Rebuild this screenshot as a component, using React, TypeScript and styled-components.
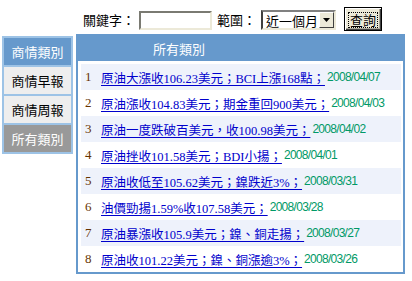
import styled, { createGlobalStyle } from 'styled-components';

type NewsItem = { title: string; date: string };
type TabVariant = 'active' | 'normal' | 'dim';

const news: NewsItem[] = [
  { title: '原油大漲收106.23美元；BCI上漲168點；', date: '2008/04/07' },
  { title: '原油漲收104.83美元；期金重回900美元；', date: '2008/04/03' },
  { title: '原油一度跌破百美元，收100.98美元；', date: '2008/04/02' },
  { title: '原油挫收101.58美元；BDI小揚；', date: '2008/04/01' },
  { title: '原油收低至105.62美元；鎳跌近3%；', date: '2008/03/31' },
  { title: '油價勁揚1.59%收107.58美元；', date: '2008/03/28' },
  { title: '原油暴漲收105.9美元；鎳、銅走揚；', date: '2008/03/27' },
  { title: '原油收101.22美元；鎳、銅漲逾3%；', date: '2008/03/26' },
];

const tabs: { label: string; variant: TabVariant }[] = [
  { label: '商情類別', variant: 'active' },
  { label: '商情早報', variant: 'normal' },
  { label: '商情周報', variant: 'normal' },
  { label: '所有類別', variant: 'dim' },
];

export default function App() {
  return (
    <>
      <GlobalStyle />
      <Page>
        <SearchBar>
          <Label>關鍵字：</Label>
          <KeywordInput type="text" />
          <Label>範圍：</Label>
          <SelectBox>
            <SelectText>近一個月</SelectText>
            <SelectArrow>
              <svg width="7" height="4" viewBox="0 0 7 4">
                <polygon points="0,0 7,0 3.5,4" fill="#000" />
              </svg>
            </SelectArrow>
          </SelectBox>
          <SearchButton>
            <span>查詢</span>
          </SearchButton>
        </SearchBar>

        <SideNav>
          {tabs.map((tab) => (
            <Tab key={tab.label} $variant={tab.variant}>
              {tab.label}
            </Tab>
          ))}
        </SideNav>

        <Panel>
          <PanelHeader>所有類別</PanelHeader>
          <NewsList>
            {news.map((item, i) => (
              <NewsRow key={item.date} $striped={i % 2 === 0}>
                <RowNum>{i + 1}</RowNum>
                <NewsLink href="#">{item.title}</NewsLink>
                <NewsDate>{item.date}</NewsDate>
              </NewsRow>
            ))}
          </NewsList>
        </Panel>
      </Page>
    </>
  );
}

const GlobalStyle = createGlobalStyle`
  body {
    margin: 0;
    background: #fff;
    font-family: "Noto Sans CJK TC", sans-serif;
    font-size: 13px;
  }
`;

const Page = styled.div`
  display: grid;
  grid-template-columns: 71px 329px;
  grid-template-rows: auto auto;
  column-gap: 3px;
  row-gap: 3px;
  padding: 7px 0 0 2px;
  align-items: start;
`;

const SearchBar = styled.div`
  grid-column: 2;
  grid-row: 1;
  display: flex;
  align-items: center;
  height: 24px;
  padding-left: 7px;
`;

const Label = styled.span`
  font-size: 13px;
  color: #000;
  margin-right: 4px;
  line-height: 1;
`;

const KeywordInput = styled.input`
  box-sizing: border-box;
  width: 73px;
  height: 19px;
  margin: 2px 5px 0 0;
  padding: 0;
  background: #fff;
  border: 2px solid;
  border-color: #7a7a72 #ece9d8 #ece9d8 #7a7a72;
  outline: none;
`;

const SelectBox = styled.div`
  box-sizing: border-box;
  display: flex;
  align-items: center;
  width: 75px;
  height: 20px;
  margin: 2px 8px 0 1px;
  background: #fff;
  border: 2px solid;
  border-color: #808080 #ece9d8 #ece9d8 #404040;
`;

const SelectText = styled.span`
  flex: 1;
  padding-left: 3px;
  font-size: 13px;
  line-height: 1;
`;

const SelectArrow = styled.div`
  box-sizing: border-box;
  display: flex;
  align-items: center;
  justify-content: center;
  width: 15px;
  height: 16px;
  background: #ece9d8;
  border: 1px solid;
  border-color: #fff #404040 #404040 #fff;
`;

const SearchButton = styled.button`
  box-sizing: border-box;
  width: 38px;
  height: 24px;
  padding: 0;
  background: #ece9d8;
  border: 1px solid #000;
  box-shadow: inset 1px 1px #fff, inset -1px -1px #404040, inset -2px -2px #aca899;
  font-family: "Noto Sans CJK TC", sans-serif;
  font-size: 13px;
  color: #000;

  span {
    display: inline-block;
    line-height: 14px;
    padding: 0 1px;
    outline: 1px dotted #000;
  }
`;

const SideNav = styled.div`
  grid-column: 1;
  grid-row: 2;
  box-sizing: border-box;
  display: flex;
  flex-direction: column;
  gap: 2px;
  margin-top: 2px;
  border: 2px solid #9dc3e6;
  background: #9dc3e6;
`;

const tabColors: Record<TabVariant, { bg: string; fg: string }> = {
  active: { bg: '#6699cc', fg: '#fff' },
  normal: { bg: '#eeeeee', fg: '#000' },
  dim: { bg: '#999999', fg: '#fff' },
};

const Tab = styled.div<{ $variant: TabVariant }>`
  height: 27px;
  display: flex;
  align-items: center;
  justify-content: center;
  font-size: 13px;
  background: ${(p) => tabColors[p.$variant].bg};
  color: ${(p) => tabColors[p.$variant].fg};
`;

const Panel = styled.div`
  grid-column: 2;
  grid-row: 2;
  box-sizing: border-box;
  border: 2px solid #6699cc;
  background: #fff;
`;

const PanelHeader = styled.div`
  height: 25px;
  line-height: 25px;
  padding-left: 75px;
  background: #6699cc;
  color: #fff;
  font-size: 13px;
`;

const NewsList = styled.div`
  padding: 3px 2px 0 3px;
`;

const NewsRow = styled.div<{ $striped: boolean }>`
  display: flex;
  align-items: center;
  height: 26px;
  white-space: nowrap;
  background: ${(p) => (p.$striped ? '#eef2fb' : '#fff')};
`;

const RowNum = styled.span`
  box-sizing: border-box;
  width: 20px;
  padding-left: 4px;
  font-family: "Liberation Serif", serif;
  font-size: 13px;
  color: #663300;
`;

const NewsLink = styled.a`
  font-family: "Liberation Serif", "Noto Sans CJK TC", serif;
  font-size: 12.5px;
  color: #0000cc;
  text-decoration: underline;
  text-decoration-skip-ink: none;
  text-underline-offset: 2px;
`;

const NewsDate = styled.span`
  margin-left: 2px;
  font-family: "Liberation Sans", sans-serif;
  font-size: 12px;
  letter-spacing: -0.7px;
  color: #009966;
`;
